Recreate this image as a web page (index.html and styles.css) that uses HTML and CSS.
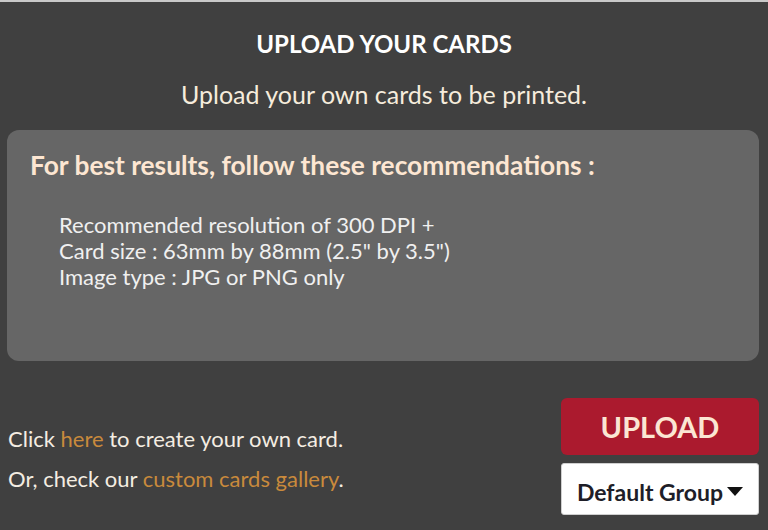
FILE: index.html
```html
<!DOCTYPE html>
<html>
<head>
<meta charset="utf-8">
<link rel="stylesheet" href="styles.css">
</head>
<body>
<div class="page">
  <h1 class="title">UPLOAD YOUR CARDS</h1>
  <p class="subtitle">Upload your own cards to be printed.</p>
  <div class="panel">
    <h2 class="panel-heading">For best results, follow these recommendations :</h2>
    <ul class="recs">
      <li>Recommended resolution of 300 DPI +</li>
      <li>Card size : 63mm by 88mm (2.5" by 3.5")</li>
      <li>Image type : JPG or PNG only</li>
    </ul>
  </div>
  <div class="bottom">
    <div class="links">
      <p class="line">Click <a href="#" class="link">here</a> to create your own card.</p>
      <p class="line">Or, check our <a href="#" class="link">custom cards gallery</a>.</p>
    </div>
    <div class="actions">
      <button class="upload">UPLOAD</button>
      <div class="select">Default Group<span class="caret"></span></div>
    </div>
  </div>
</div>
</body>
</html>
```
FILE: styles.css
```css
html, body {
  margin: 0;
  padding: 0;
  background: #404040;
}
body {
  font-family: "Lato", "Open Sans", sans-serif;
  color: #f4ede2;
}
.page {
  border-top: 2px solid #c9c9c9;
  height: 528px;
  display: flex;
  flex-direction: column;
}
.title {
  margin: 28px 0 0;
  text-align: center;
  font-size: 24px;
  font-weight: 700;
  line-height: 28px;
  color: #ffffff;
  letter-spacing: 0;
}
.subtitle {
  margin: 21px 0 0;
  text-align: center;
  font-size: 25px;
  line-height: 30px;
  color: #f6ecdc;
}
.panel {
  margin: 21px 9px 0 7px;
  height: 231px;
  box-sizing: border-box;
  background: #666666;
  border-radius: 12px;
  padding: 20px 23px;
}
.panel-heading {
  margin: 0;
  font-size: 26.3px;
  font-weight: 700;
  line-height: 30px;
  color: #fde6d2;
}
.recs {
  list-style: none;
  margin: 32px 0 0;
  padding: 0 0 0 29px;
  font-size: 22px;
  line-height: 26px;
  color: #f0f0f0;
}
.bottom {
  display: flex;
  justify-content: space-between;
  align-items: flex-start;
  margin-top: 37px;
  padding: 0 9px 0 8px;
}
.links {
  padding-top: 28px;
}
.line {
  margin: 0 0 14px;
  font-size: 22px;
  line-height: 26px;
  color: #f4ede2;
}
.link {
  color: #c98a3c;
  text-decoration: none;
}
.actions {
  display: flex;
  flex-direction: column;
  gap: 8px;
  width: 198px;
}
.upload {
  height: 57px;
  border: none;
  border-radius: 6px;
  background: #ab1a2e;
  color: #fbe6d3;
  font-family: inherit;
  font-size: 29px;
  font-weight: 700;
  padding: 0;
  cursor: pointer;
}
.select {
  height: 52px;
  box-sizing: border-box;
  background: #ffffff;
  border: 1px solid #cfcfcf;
  border-radius: 3px;
  display: flex;
  align-items: center;
  justify-content: center;
  gap: 4px;
  padding-top: 6px;
  font-size: 23px;
  font-weight: 700;
  color: #1e1e28;
}
.caret {
  width: 0;
  height: 0;
  border-left: 8px solid transparent;
  border-right: 8px solid transparent;
  border-top: 9px solid #111111;
  margin-top: -2px;
}
```
